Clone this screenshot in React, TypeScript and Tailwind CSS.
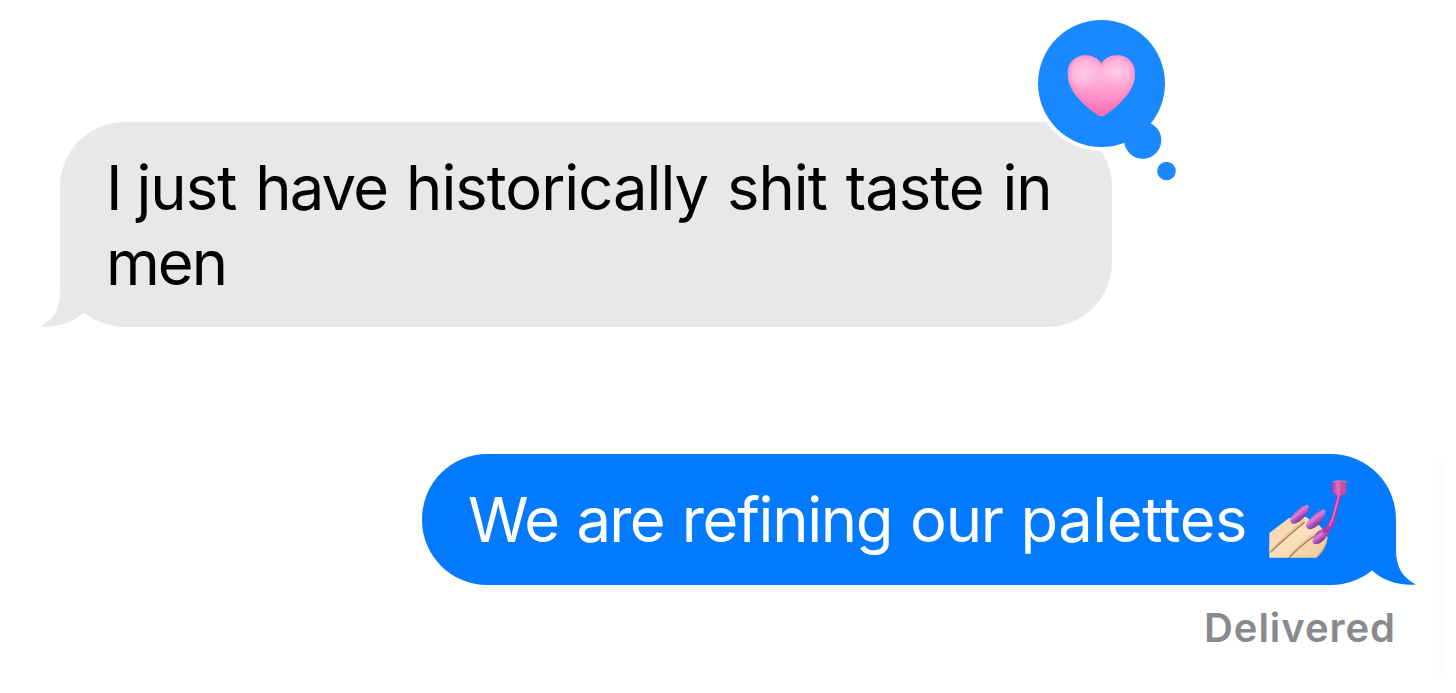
import clsx from "clsx";
import type { ReactNode } from "react";

const HEART =
  "M34 8.4 C30.5 3.2 25 0.2 18 0.2 C7.5 0.2 0.3 8 0.3 18.5 C0.3 36 16 50 30.5 60 C33 61.6 35.5 61.6 38 60 C52 50 67.7 36 67.7 18.5 C67.7 8 60.5 0.2 50 0.2 C43 0.2 37.5 3.2 34 8.4 Z";

function Tail({ side }: { side: "left" | "right" }) {
  return (
    <svg
      viewBox="0 0 64 66"
      className={clsx("absolute bottom-0 h-[66px] w-16", side === "right" ? "-right-5 -scale-x-100 text-[#047bff]" : "-left-5 text-[#e8e8ea]")}
      fill="currentColor"
    >
      <path d="M20 0 L20 30 C20 48 14 58 0.3 65.6 C16 67 33 62 44.3 51.3 L64 20 Z" />
    </svg>
  );
}

// Tapback bubble with its two trailing dots
function Reaction() {
  return (
    <svg viewBox="0 0 138 162" className="absolute -top-[102px] -right-16 h-[162px] w-[138px] overflow-visible">
      <defs>
        <linearGradient id="heart-base" x1="0" y1="0" x2="0" y2="1">
          <stop offset="0" stopColor="#ffb5dc" />
          <stop offset="0.4" stopColor="#ffb0da" />
          <stop offset="0.7" stopColor="#ff8fc8" />
          <stop offset="1" stopColor="#fc62a9" />
        </linearGradient>
        <radialGradient id="heart-shine">
          <stop offset="0" stopColor="#ffd3ea" stopOpacity="0.8" />
          <stop offset="1" stopColor="#ffc4e4" stopOpacity="0" />
        </radialGradient>
        <filter id="heart-soft" x="-20%" y="-20%" width="140%" height="140%">
          <feGaussianBlur stdDeviation="2" />
        </filter>
        <clipPath id="heart-clip">
          <path d={HEART} />
        </clipPath>
      </defs>
      <circle cx="63.5" cy="63.5" r="67.5" fill="#fff" />
      <g fill="#1a88ff">
        <circle cx="63.5" cy="63.5" r="63.5" />
        <circle cx="104.7" cy="120.2" r="18.6" />
        <circle cx="128.5" cy="151" r="9.3" />
      </g>
      <g transform="translate(29.3 35)" clipPath="url(#heart-clip)">
        <rect width="68" height="62" fill="url(#heart-base)" />
        <ellipse cx="17" cy="18" rx="17" ry="16" fill="url(#heart-shine)" />
        <ellipse cx="50" cy="17" rx="18" ry="13" fill="url(#heart-shine)" />
        <path d={HEART} fill="none" stroke="#f679bb" strokeWidth="3" filter="url(#heart-soft)" />
      </g>
    </svg>
  );
}

function NailPolish() {
  return (
    <svg viewBox="0 0 80 80" className="-mt-0.5 -mb-3 h-20 w-20" aria-label="💅">
      <defs>
        <linearGradient id="skin" x1="0" y1="0" x2="1" y2="1">
          <stop offset="0" stopColor="#f3d5aa" />
          <stop offset="0.5" stopColor="#fae0bd" />
          <stop offset="1" stopColor="#eac496" />
        </linearGradient>
        <linearGradient id="nail" x1="0.25" y1="0.2" x2="0.7" y2="0.8">
          <stop offset="0" stopColor="#93358f" />
          <stop offset="0.4" stopColor="#d882d9" />
          <stop offset="0.62" stopColor="#b957be" />
          <stop offset="1" stopColor="#762a82" />
        </linearGradient>
        <linearGradient id="cap" x1="0" y1="0" x2="1" y2="0">
          <stop offset="0" stopColor="#a93aa4" />
          <stop offset="0.4" stopColor="#e56fb5" />
          <stop offset="0.65" stopColor="#c9509e" />
          <stop offset="1" stopColor="#a84fb0" />
        </linearGradient>
      </defs>
      <path d="M1.3 53 L21 38 L38 37 L52 46 L59.5 57 C59 65 54.5 72.5 48.5 77.8 L1.3 77.8 Z" fill="url(#skin)" />
      <path d="M3 71 C13 61 24 51 36 41" fill="none" stroke="#d9ad7d" strokeWidth="3" opacity="0.5" />
      <path d="M22 76 C30 68 38 61 46 55" fill="none" stroke="#d9ad7d" strokeWidth="3" opacity="0.5" />
      <path d="M2 72.7 C12 63 24 52.5 37 42" fill="none" stroke="#a07048" strokeWidth="1.1" opacity="0.85" />
      <path d="M21 77.5 C29 69.5 37 62.5 45.5 56.7" fill="none" stroke="#a07048" strokeWidth="1.1" opacity="0.85" />
      <path d="M59 58 C58.5 65 54 72.5 48 77.6" fill="none" stroke="#cc9a68" strokeWidth="1.4" opacity="0.7" />
      <path d="M22 39.5 C25 33 34 25 39 24.7 C43.5 26 38.5 35.5 33 40.2 C28.5 43.8 23 46.5 22 39.5 Z" fill="url(#nail)" />
      <path d="M38 45 C41 38 50.5 29.8 56 29.6 C60 31 55.5 40.5 49.5 45.5 C45 49.2 38.5 52 38 45 Z" fill="url(#nail)" />
      <path d="M44.5 60.5 C45 55.5 49.5 50.5 56 48.5 C60 48 62 50 59.5 54.8 C57 59.5 53.5 63 49.5 64 C46 64.6 44.2 63.5 44.5 60.5 Z" fill="url(#nail)" />
      <path d="M69 13 L74 13 L67 38.5 C68.3 41.5 67 44.5 64.3 46.5 C62.5 50 60.5 53.5 56.5 53.8 C53.5 53 54.5 49.5 57.5 47 C60 45 60.5 41.5 63 38 Z" fill="#b538aa" />
      <path d="M71 15 L65 38 L61 46.5" fill="none" stroke="#dd7aca" strokeWidth="1.5" />
      <path d="M64.5 2 C68.5 0.3 74.5 0.5 78.6 1.5 L78.2 13.8 C74.5 16.2 68.5 16 64 12.8 Z" fill="url(#cap)" />
      <path d="M65 1.9 C69 0.7 74.5 0.8 78.3 1.8" fill="none" stroke="#bd78c8" strokeWidth="1.4" />
    </svg>
  );
}

function Bubble({ side, children }: { side: "left" | "right"; children: ReactNode }) {
  return (
    <div
      className={clsx(
        "relative flex items-start justify-between rounded-[65px] px-[46px] pt-7 text-[61.5px] leading-[75px] whitespace-nowrap",
        side === "right"
          ? "w-[974px] self-end bg-[#047bff] pr-12 pb-7 text-white [word-spacing:1.8px]"
          : "w-[1052px] self-start bg-[#e8e8ea] pb-[27px] text-black [word-spacing:2.6px]",
      )}
    >
      <Tail side={side} />
      {children}
    </div>
  );
}

export default function App() {
  return (
    <div className="flex h-[693px] w-[1456px] overflow-hidden bg-white font-['Inter',sans-serif]">
      <main className="flex w-[1434px] flex-col pt-[122px] pr-[38px] pl-[60px]">
        <Bubble side="left">
          <p className="relative tracking-[-1px]">
            <span className="tracking-[-5px]">I</span> just <span className="tracking-[-1.8px]">have</span> historically shit
            taste in
            <br />
            <span className="tracking-[-2px]">men</span>
          </p>
          <Reaction />
        </Bubble>

        <div className="mt-[127px] flex flex-col">
          <Bubble side="right">
            <p className="relative tracking-[-1.3px]">
              We <span className="tracking-[-1.7px]">are</span> refining our <span className="tracking-[-0.4px]">palettes</span>
            </p>
            <NailPolish />
          </Bubble>
        </div>

        <p className="mt-[19px] self-end text-[40px] leading-[48px] font-semibold tracking-[0.95px] text-[#8a8a8d]">Delivered</p>
      </main>
      <div className="mt-[462px] h-[215px] w-[11px] bg-[#fdfdfd]" />
    </div>
  );
}
